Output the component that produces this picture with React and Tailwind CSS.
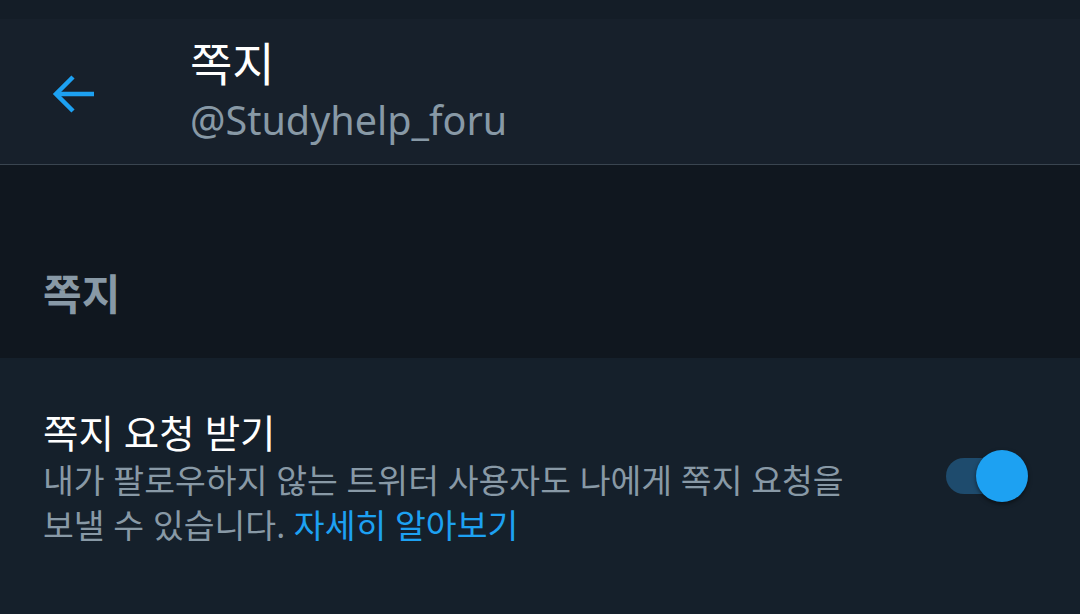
import React from 'react';

const font = { fontFamily: '"Noto Sans", "Noto Sans CJK KR", sans-serif' };

export default function App() {
  return (
    <div className="w-[1080px] h-[614px] overflow-hidden bg-[#15202b] flex flex-col" style={font}>
      <div className="h-[19px] bg-[#141d27]" />
      <div className="h-[146px] bg-[#17202b] border-b border-[#3a4550] flex items-center">
        <div className="w-[190px] flex items-center pl-[52px] pt-[4px]">
          <svg width="44" height="44" viewBox="0 0 44 44" fill="none" stroke="#1da1f2" strokeWidth="4.5" strokeLinecap="butt" strokeLinejoin="miter">
            <path d="M42 22H4" />
            <path d="M21 5L4 22l17 17" />
          </svg>
        </div>
        <div className="flex flex-col pt-[4px]">
          <div className="text-[46px] leading-[52px] text-white">쪽지</div>
          <div className="text-[39.5px] leading-[62px] text-[#8899a6]">@Studyhelp_foru</div>
        </div>
      </div>
      <div className="h-[193px] bg-[#10171f] flex items-end pl-[43px] pb-[34px]">
        <div className="text-[42px] leading-[60px] font-bold text-[#8899a6]">쪽지</div>
      </div>
      <div className="flex-1 flex items-start pt-[50px] pl-[43px] pr-[52px]">
        <div className="flex-1 flex flex-col">
          <div className="text-[38.5px] leading-[50px] text-white">쪽지 요청 받기</div>
          <p className="text-[33.5px] leading-[45px] text-[#8899a6] w-[830px]">
            내가 팔로우하지 않는 트위터 사용자도 나에게 쪽지 요청을 보낼 수 있습니다.{' '}
            <a className="text-[#1da1f2]">자세히 알아보기</a>
          </p>
        </div>
        <div className="relative w-[82px] h-[52px] mt-[42px] flex items-center">
          <div className="w-[58px] h-[36px] rounded-full bg-[#1e4b6d]" />
          <div className="absolute right-0 top-0 w-[52px] h-[52px] rounded-full bg-[#1da1f2] shadow-[0_2px_4px_rgba(0,0,0,0.5)]" />
        </div>
      </div>
    </div>
  );
}
